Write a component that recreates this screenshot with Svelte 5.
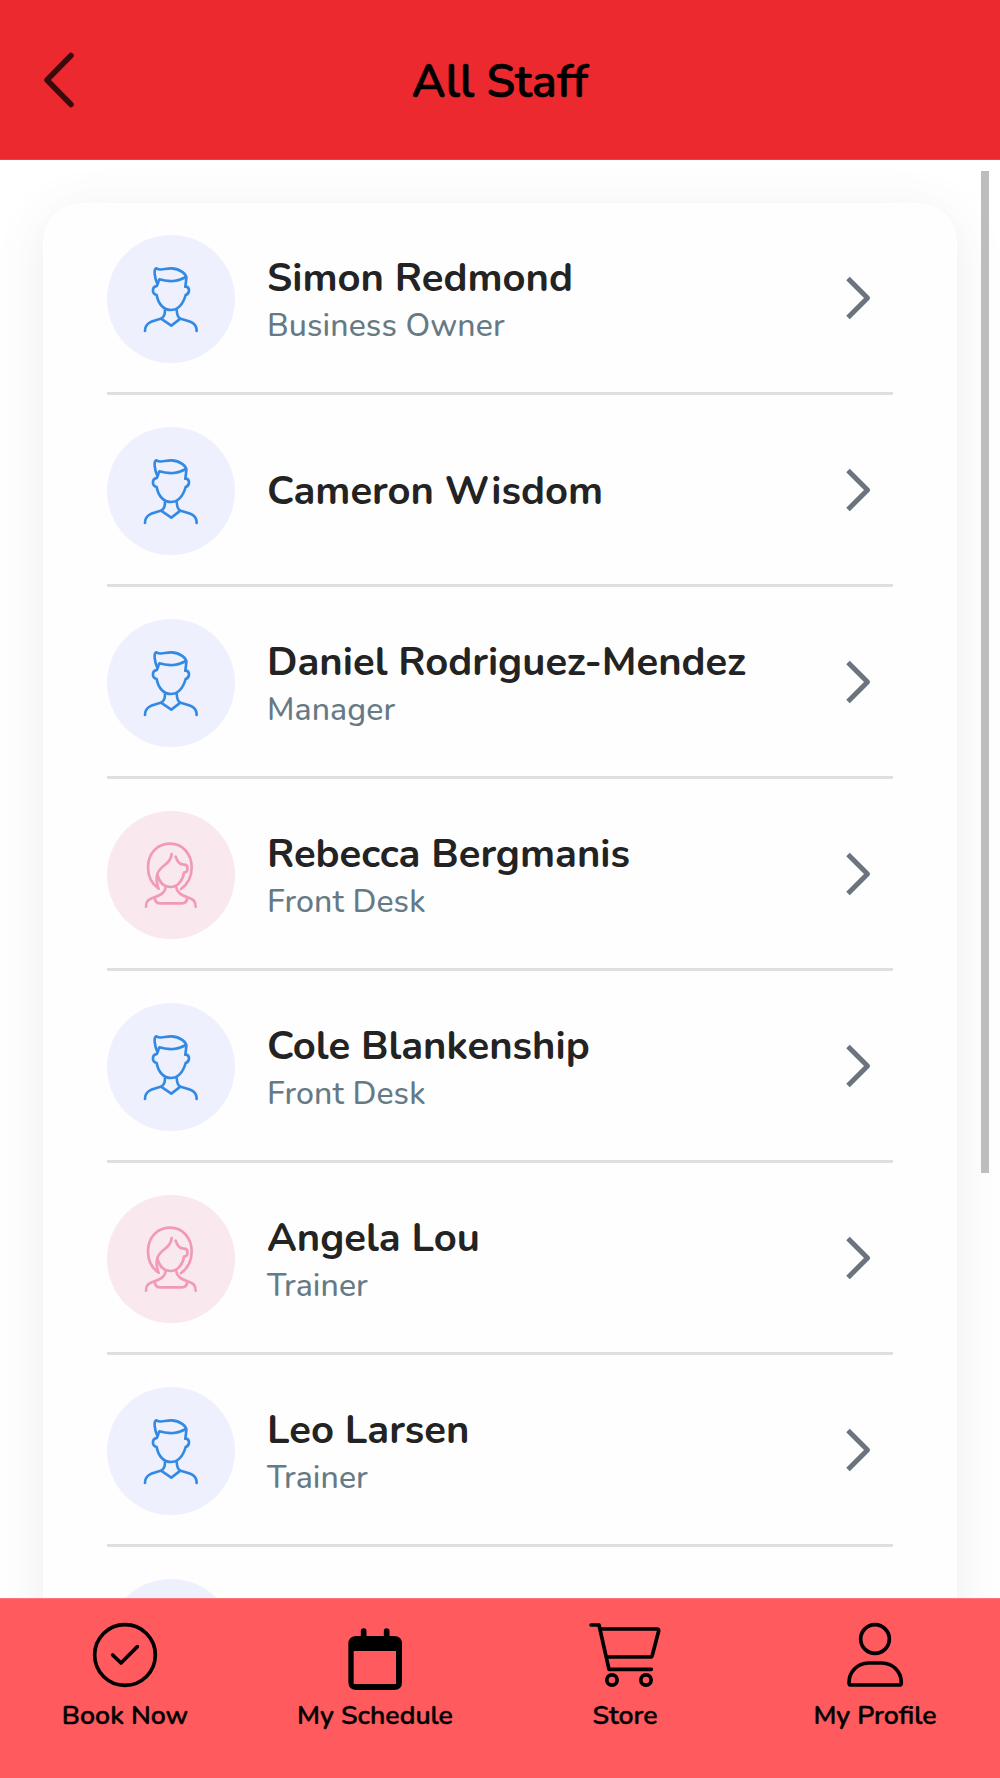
<script>
  const staff = [
    { name: 'Simon Redmond', role: 'Business Owner', gender: 'male' },
    { name: 'Cameron Wisdom', role: '', gender: 'male' },
    { name: 'Daniel Rodriguez-Mendez', role: 'Manager', gender: 'male' },
    { name: 'Rebecca Bergmanis', role: 'Front Desk', gender: 'female' },
    { name: 'Cole Blankenship', role: 'Front Desk', gender: 'male' },
    { name: 'Angela Lou', role: 'Trainer', gender: 'female' },
    { name: 'Leo Larsen', role: 'Trainer', gender: 'male' },
    { name: '', role: '', gender: 'male' },
  ]

  const tabs = [
    { label: 'Book Now', icon: 'check' },
    { label: 'My Schedule', icon: 'calendar' },
    { label: 'Store', icon: 'cart' },
    { label: 'My Profile', icon: 'profile' },
  ]
</script>

<div class="App">
  <header class="Header">
    <svg class="Back" viewBox="0 0 40 64">
      <path d="M32 7.500 L8 32 L32 56.500" />
    </svg>
    <h1 class="Title">All Staff</h1>
  </header>

  <main class="Content">
    <ul class="Card">
      {#each staff as person}
        <li class="Row">
          <div class="Avatar {person.gender}">
            {#if person.gender === 'male'}
              <svg viewBox="21 27 384 384">
                <path d="M172 174 C164 155 160 130 169 127 C182 136 196 126 214 127 C240 128 260 144 259 158 L256 182" />
                <path d="M170 180 C176 172 174 165 178 160 C190 164 205 166 220 165 C236 164 248 158 258 153" />
                <path d="M170 180 C155 182 155 203 170 207 C175 235 192 252 212 252 C232 252 248 238 257 207 C271 202 270 182 256 182" />
                <path d="M195 252 C195 265 190 275 183 278 C160 285 135 288 135 315" />
                <path d="M230 252 C231 265 234 275 241 278 C265 285 290 288 290 315" />
                <path d="M183 278 L214 299 L241 278" />
              </svg>
            {:else}
              <svg viewBox="21 31 384 384">
                <path d="M176 264 C155 250 144 228 144 200 C144 155 175 129 210 129 C248 129 275 160 275 200 C275 230 262 252 243 265" />
                <path d="M215 160 C212 185 195 190 182 204 C172 214 169 225 170 240 L174 262" />
                <path d="M172 222 C178 245 192 259 212 259 C232 259 248 240 252 216 C266 214 266 192 252 192 C240 192 232 185 227 168" />
                <path d="M197 260 C195 278 180 283 164 290 C145 296 138 300 138 318" />
                <path d="M229 260 C231 278 246 283 262 290 C280 296 287 300 287 318" />
                <path d="M164 290 C165 303 170 308 180 308 H246 C256 308 261 303 262 290" />
              </svg>
            {/if}
          </div>
          <div class="Info">
            <div class="Name">{person.name}</div>
            {#if person.role}
              <div class="Role">{person.role}</div>
            {/if}
          </div>
          <svg class="Chevron" viewBox="0 0 30 48">
            <path d="M5 4.500 L24.500 24 L5 43.500" />
          </svg>
        </li>
      {/each}
    </ul>
    <div class="Scrollbar"></div>
  </main>

  <nav class="Tabs">
    {#each tabs as tab}
      <div class="Tab">
        {#if tab.icon === 'check'}
          <svg viewBox="255 300 240 216">
            <circle cx="375" cy="405" r="91" />
            <path d="M338 405 L363 429 L412 380" />
          </svg>
        {:else if tab.icon === 'calendar'}
          <svg viewBox="1005 300 240 216">
            <path class="thick" d="M1091 333 V360 M1160 333 V360" />
            <path
              class="solid"
              fill-rule="evenodd"
              d="M1070 348 H1182 Q1206 348 1206 372 V486 Q1206 510 1182 510 H1070 Q1045 510 1045 486 V372 Q1045 348 1070 348 Z M1061 393 V492 H1188 V393 Z"
            />
          </svg>
        {:else if tab.icon === 'cart'}
          <svg viewBox="255 300 240 216">
            <path d="M273 315 H297 L327 448 H454" />
            <path d="M304 327 H471 Q477 327 476 333 L457 406 Q456 411 451 411 H322" />
            <circle cx="336" cy="480" r="15.500" />
            <circle cx="438" cy="480" r="15.500" />
          </svg>
        {:else}
          <svg viewBox="1005 300 240 216">
            <circle cx="1125" cy="357" r="43" />
            <path d="M1105 429 H1146 C1180 430 1204 456 1204 488 Q1204 495 1197 495 H1053 Q1047 495 1047 488 C1047 456 1071 430 1105 429 Z" />
          </svg>
        {/if}
        <span class="Label">{tab.label}</span>
      </div>
    {/each}
  </nav>
</div>

<style>
  :global(body) {
    margin: 0;
    background: #fff;
  }

  .App {
    display: flex;
    flex-direction: column;
    width: 1000px;
    height: 1778px;
    overflow: hidden;
    font-family: Nunito, Lato, 'Open Sans', sans-serif;
  }

  svg {
    fill: none;
    stroke-linecap: round;
    stroke-linejoin: round;
  }

  .Header {
    box-sizing: border-box;
    flex: 0 0 160px;
    display: grid;
    grid-template-columns: 80px 1fr 80px;
    align-items: center;
    background: #ec292f;
    border-bottom: 1px solid #ee4047;
  }
  .Back {
    width: 40px;
    height: 64px;
    margin-left: 39px;
    stroke: #3b0a0c;
    stroke-width: 5.500;
  }
  .Title {
    margin: 0;
    padding-top: 4px;
    text-align: center;
    font-size: 46px;
    font-weight: 600;
    line-height: 60px;
    letter-spacing: 0.15px;
    color: #000;
    -webkit-text-stroke: 0.700px #000;
  }

  .Content {
    flex: 1 1 0;
    min-height: 0;
    display: flex;
    align-items: flex-start;
    overflow: hidden;
    background: #fff;
  }
  .Card {
    flex: 0 0 914px;
    box-sizing: border-box;
    margin: 43px 0 0 43px;
    padding: 0 64px;
    list-style: none;
    background: #fefefe;
    border-radius: 38px;
    box-shadow: 0 10px 50px rgba(80, 88, 120, 0.11);
  }
  .Scrollbar {
    width: 8px;
    height: 1002px;
    margin: 11px 0 0 24px;
    background: #bdbdbd;
    z-index: 1;
  }

  .Row {
    box-sizing: border-box;
    height: 192px;
    display: flex;
    align-items: center;
    padding-top: 1px;
    border-bottom: 3px solid #dfdfdf;
  }
  .Avatar {
    flex: 0 0 128px;
    height: 128px;
    margin-top: 1px;
    border-radius: 50%;
    stroke-width: 8;
  }
  .Avatar svg {
    display: block;
    width: 128px;
    height: 128px;
  }
  .male {
    background: #eef1fd;
    stroke: #348ae2;
  }
  .female {
    background: #f9e8ed;
    stroke: #f09ab5;
  }

  .Info {
    flex: 1 1 auto;
    margin-top: 1px;
    margin-left: 32px;
    white-space: nowrap;
  }
  .Name {
    font-size: 40px;
    font-weight: 700;
    line-height: 50px;
    color: #232323;
  }
  .Role {
    margin-top: 2px;
    margin-bottom: -2px;
    font-size: 32px;
    font-weight: 500;
    line-height: 42px;
    letter-spacing: 0.1px;
    color: #667a85;
  }
  .Chevron {
    width: 30px;
    height: 48px;
    margin-right: 20px;
    stroke: #6b747e;
    stroke-width: 5;
    stroke-linecap: butt;
  }

  .Tabs {
    box-sizing: border-box;
    flex: 0 0 180px;
    display: grid;
    grid-template-columns: repeat(4, 1fr);
    background: #ff5a5e;
    border-top: 1px solid #ff7478;
  }
  .Tab {
    display: flex;
    flex-direction: column;
    align-items: center;
    padding-top: 21px;
  }
  .Tab svg {
    width: 80px;
    height: 72px;
    stroke: #000;
    stroke-width: 11;
  }
  .Tab .thick {
    stroke-width: 17;
  }
  .Tab .solid {
    fill: #000;
    stroke: none;
  }
  .Label {
    margin-top: 6px;
    font-size: 26.670px;
    font-weight: 600;
    line-height: 34px;
    color: #000;
    -webkit-text-stroke: 0.400px #000;
  }
</style>
